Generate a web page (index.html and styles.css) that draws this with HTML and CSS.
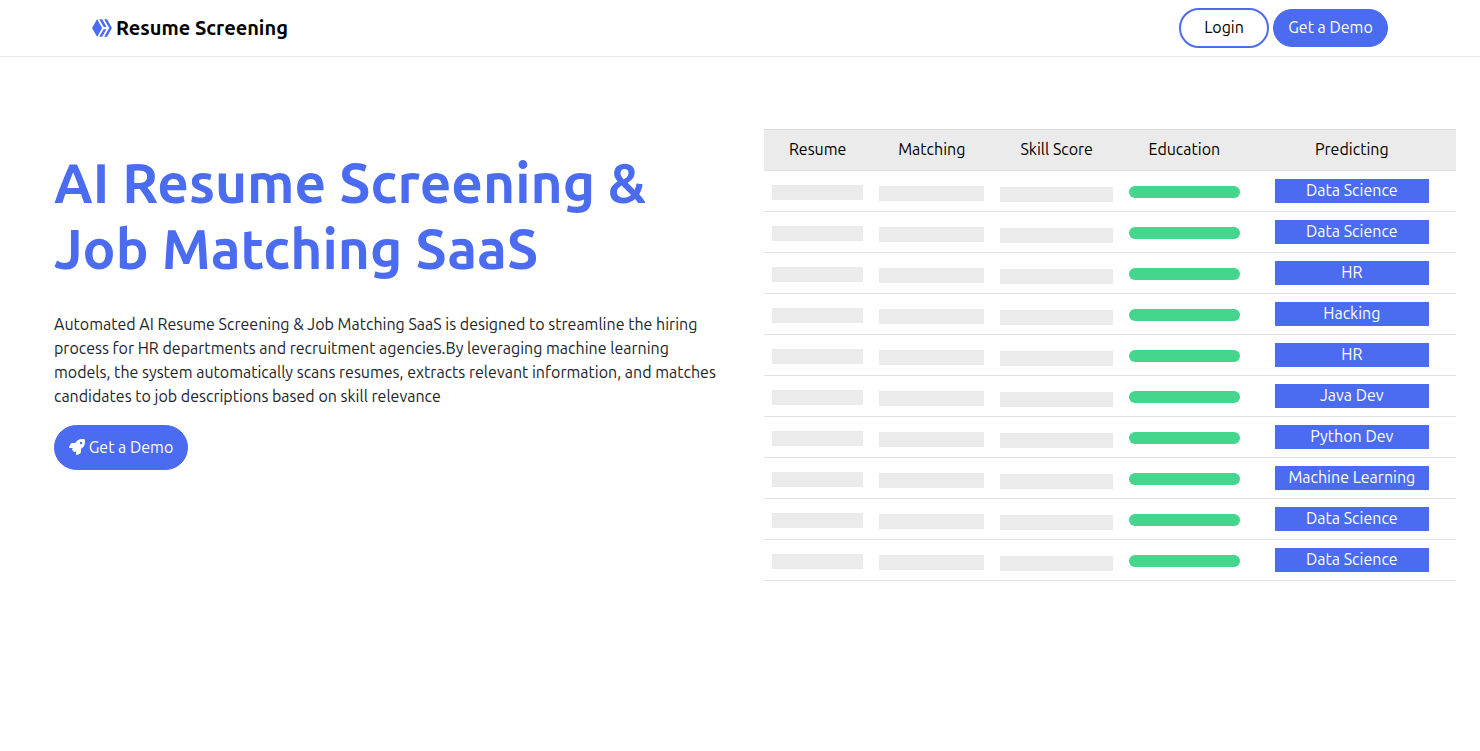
FILE: index.html
```html
<!DOCTYPE html>
<html lang="en">
<head>
<meta charset="utf-8">
<meta name="viewport" content="width=device-width, initial-scale=1">
<title>Resume Screening</title>
<link rel="stylesheet" href="styles.css">
</head>
<body>
<header class="navbar">
  <div class="navbar-inner">
    <a class="brand" href="#">
      <svg class="brand-icon" viewBox="0 0 512 512" aria-hidden="true"><path d="M260.353,254.878,131.538,33.1a2.208,2.208,0,0,0-3.829.009L.3,254.887A2.234,2.234,0,0,0,.3,257.122L129.116,478.9a2.208,2.208,0,0,0,3.83-.009L260.358,257.113A2.239,2.239,0,0,0,260.353,254.878Zm39.078-25.713a2.19,2.19,0,0,0,1.9,1.111h66.509a2.226,2.226,0,0,0,1.9-3.341L259.115,33.111a2.187,2.187,0,0,0-1.9-1.111H190.707a2.226,2.226,0,0,0-1.9,3.341ZM511.7,254.886,384.9,33.112A2.2,2.2,0,0,0,382.99,32h-66.6a2.226,2.226,0,0,0-1.906,3.34L440.652,256,314.481,476.66a2.226,2.226,0,0,0,1.906,3.34h66.6a2.2,2.2,0,0,0,1.906-1.112L511.7,257.114A2.243,2.243,0,0,0,511.7,254.886ZM366.016,284.917H299.508a2.187,2.187,0,0,0-1.9,1.111l-108.8,190.631a2.226,2.226,0,0,0,1.9,3.341h66.509a2.187,2.187,0,0,0,1.9-1.111l108.8-190.631A2.226,2.226,0,0,0,366.016,284.917Z"/></svg>
      <span>Resume Screening</span>
    </a>
    <nav class="actions">
      <button class="btn btn-outline" type="button">Login</button>
      <button class="btn btn-primary" type="button">Get a Demo</button>
    </nav>
  </div>
</header>
<main class="hero">
  <section class="intro">
    <h1 class="title">AI Resume Screening &amp; Job Matching SaaS</h1>
    <p class="lead">Automated AI Resume Screening &amp; Job Matching SaaS is designed to streamline the hiring process for HR departments and recruitment agencies.By leveraging machine learning models, the system automatically scans resumes, extracts relevant information, and matches candidates to job descriptions based on skill relevance</p>
    <button class="btn btn-primary btn-large" type="button">
      <svg class="btn-icon" viewBox="0 0 512 512" aria-hidden="true"><path d="M505.12,19.094c-1.19-5.531-6.658-11-12.207-12.188C460.716,0,435.507,0,410.407,0,307.175,0,245.269,55.203,199.052,128H94.838c-16.348.016-35.557,11.875-42.887,26.484L2.516,253.297A28.4,28.4,0,0,0,0,264a24.009,24.009,0,0,0,24.006,24H127.816l-22.474,22.469c-11.366,11.361-12.996,32.258,0,45.25L156.246,406.625c11.156,11.188,32.156,13.156,45.277,0l22.475-22.469V488a24.009,24.009,0,0,0,24.006,24,28.559,28.559,0,0,0,10.707-2.516l98.728-49.39c14.629-7.297,26.508-26.5,26.508-42.86V312.797c72.598-46.313,128.035-108.406,128.035-211.094C512.075,76.5,512.075,51.297,505.12,19.094ZM384.04,168A40,40,0,1,1,424.05,128,40.023,40.023,0,0,1,384.04,168Z"/></svg>
      <span>Get a Demo</span>
    </button>
  </section>
  <section class="preview">
    <table class="results">
      <thead>
        <tr><th class="col-resume">Resume</th><th class="col-matching">Matching</th><th class="col-skill">Skill Score</th><th class="col-education">Education</th><th class="col-predicting">Predicting</th></tr>
      </thead>
      <tbody>
        <tr><td><div class="bar bar-resume"></div></td><td><div class="bar bar-matching"></div></td><td><div class="bar bar-skill"></div></td><td><div class="meter"></div></td><td><div class="tag">Data Science</div></td></tr>
        <tr><td><div class="bar bar-resume"></div></td><td><div class="bar bar-matching"></div></td><td><div class="bar bar-skill"></div></td><td><div class="meter"></div></td><td><div class="tag">Data Science</div></td></tr>
        <tr><td><div class="bar bar-resume"></div></td><td><div class="bar bar-matching"></div></td><td><div class="bar bar-skill"></div></td><td><div class="meter"></div></td><td><div class="tag">HR</div></td></tr>
        <tr><td><div class="bar bar-resume"></div></td><td><div class="bar bar-matching"></div></td><td><div class="bar bar-skill"></div></td><td><div class="meter"></div></td><td><div class="tag">Hacking</div></td></tr>
        <tr><td><div class="bar bar-resume"></div></td><td><div class="bar bar-matching"></div></td><td><div class="bar bar-skill"></div></td><td><div class="meter"></div></td><td><div class="tag">HR</div></td></tr>
        <tr><td><div class="bar bar-resume"></div></td><td><div class="bar bar-matching"></div></td><td><div class="bar bar-skill"></div></td><td><div class="meter"></div></td><td><div class="tag">Java Dev</div></td></tr>
        <tr><td><div class="bar bar-resume"></div></td><td><div class="bar bar-matching"></div></td><td><div class="bar bar-skill"></div></td><td><div class="meter"></div></td><td><div class="tag">Python Dev</div></td></tr>
        <tr><td><div class="bar bar-resume"></div></td><td><div class="bar bar-matching"></div></td><td><div class="bar bar-skill"></div></td><td><div class="meter"></div></td><td><div class="tag">Machine Learning</div></td></tr>
        <tr><td><div class="bar bar-resume"></div></td><td><div class="bar bar-matching"></div></td><td><div class="bar bar-skill"></div></td><td><div class="meter"></div></td><td><div class="tag">Data Science</div></td></tr>
        <tr><td><div class="bar bar-resume"></div></td><td><div class="bar bar-matching"></div></td><td><div class="bar bar-skill"></div></td><td><div class="meter"></div></td><td><div class="tag">Data Science</div></td></tr>
      </tbody>
    </table>
  </section>
</main>
</body>
</html>
```
FILE: styles.css
```css
* { box-sizing: border-box; }

body {
  margin: 0;
  background: #fff;
  color: #212529;
  font-family: Ubuntu, "Open Sans", "Noto Sans", sans-serif;
  font-size: 16px;
  line-height: 24px;
}

.navbar { border-bottom: 1px solid #ebebeb; }

.navbar-inner {
  display: flex;
  align-items: center;
  justify-content: space-between;
  max-width: 1320px;
  margin: 0 auto;
  padding: 8px 12px;
}

.brand {
  display: flex;
  align-items: center;
  gap: 4px;
  color: #000;
  font-size: 20px;
  font-weight: 600;
  text-decoration: none;
}

.brand-icon { width: 20px; height: 20px; fill: #4b6cf0; }

.actions { display: flex; align-items: center; gap: 4px; }

.btn {
  display: inline-flex;
  align-items: center;
  justify-content: center;
  gap: 4px;
  border: 1px solid #4b6cf0;
  border-radius: 50px;
  font: inherit;
  cursor: pointer;
}

.btn-outline {
  min-width: 90px;
  padding: 5px 16px 7px;
  border-width: 2px;
  background: #fff;
  color: #000;
}

.btn-primary {
  min-width: 115px;
  padding: 5px 13px 7px;
  background: #4b6cf0;
  color: #fff;
}

.btn-large { height: 45px; min-width: 134px; }

.btn-icon { width: 16px; height: 16px; fill: #fff; }

.hero {
  display: grid;
  grid-template-columns: 1fr 1fr;
  align-items: start;
}

.intro { padding: 93px 24px 24px 54px; }

.title {
  margin: 0;
  color: #4b6cf0;
  font-size: 55px;
  font-weight: 600;
  line-height: 66px;
}

.lead { margin: 30px 0 17px; }

.preview { padding: 72px 24px 24px; }

.results {
  width: 100%;
  table-layout: fixed;
  border-collapse: separate;
  border-spacing: 0;
  text-align: center;
}

.results th,
.results td {
  height: 41px;
  padding: 8px;
  border-bottom: 1px solid #dee2e6;
  vertical-align: top;
}

.results th {
  height: 42px;
  padding: 7px 8px 9px;
  border-top: 1px solid #d8d9da;
  background: #ebebeb;
  color: #000;
  font-weight: 400;
}

.col-resume { width: 15.5%; }
.col-matching { width: 17.5%; }
.col-skill { width: 18.6%; }
.col-education { width: 18.3%; }
.col-predicting { width: 30.1%; }

.bar { height: 15px; background: #ebebeb; }
.bar-resume { margin-top: 6px; }
.bar-matching { margin-top: 7px; }
.bar-skill { margin-top: 8px; }

.meter {
  height: 12px;
  margin-top: 7px;
  border-radius: 6px;
  background: #43d68c;
}

.tag {
  width: 80%;
  margin: 0 auto;
  padding-bottom: 2px;
  background: #4b6cf0;
  color: #fff;
  line-height: 22px;
  white-space: nowrap;
}

@media (max-width: 900px) {
  .hero { grid-template-columns: 1fr; }
}
```
